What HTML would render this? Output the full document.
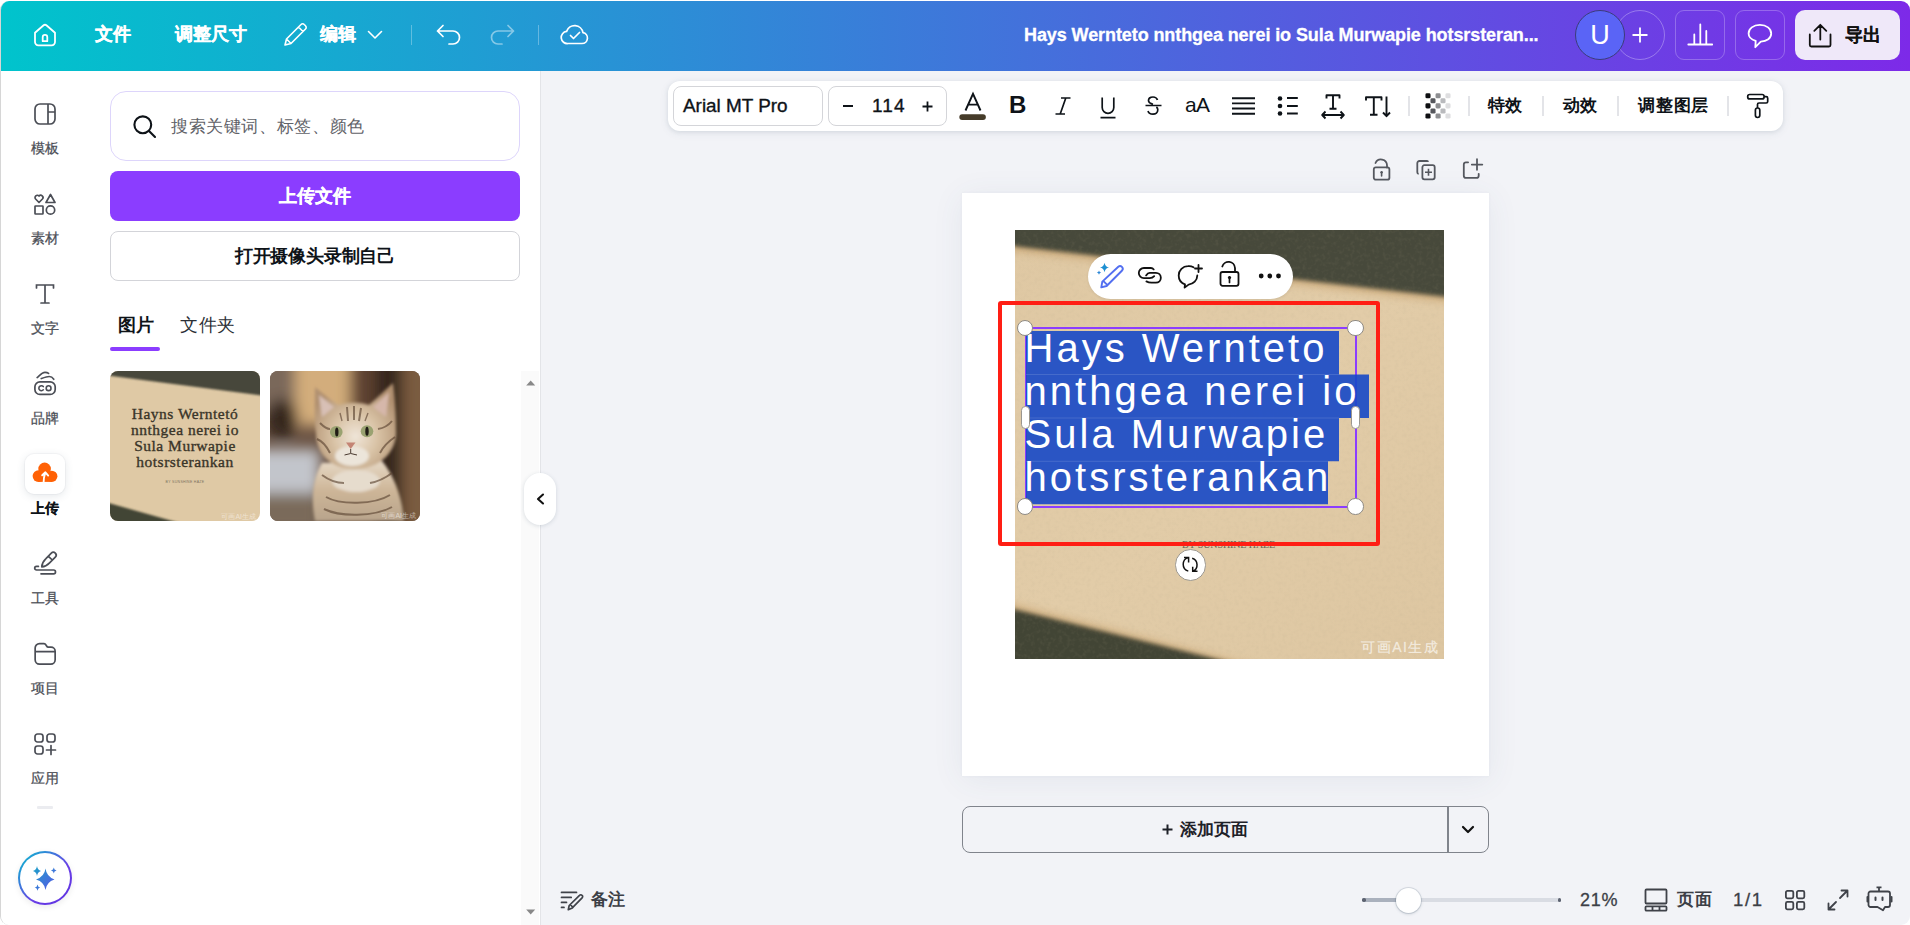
<!DOCTYPE html>
<html><head><meta charset="utf-8">
<style>
*{box-sizing:border-box;margin:0;padding:0}
html,body{width:1910px;height:925px;overflow:hidden;background:#fff;font-family:"Liberation Sans",sans-serif}
.abs{position:absolute}
#app{position:absolute;left:0;top:1px;width:1910px;height:924px;border-radius:9px;overflow:hidden;background:#f2f3f7;border-left:1px solid #d6d6d6}
#top{position:absolute;left:0;top:0;width:1909px;height:70px;background:linear-gradient(90deg,#00c4cc 0%,#7d2ae8 100%)}
.tw{color:#fff;font-weight:bold;font-size:17.5px;line-height:20px;position:absolute;-webkit-text-stroke:0.3px currentColor}
#rail{position:absolute;left:0;top:70px;width:90px;height:854px;background:#fff}
#panel{position:absolute;left:90px;top:70px;width:450px;height:854px;background:#fff;border-right:1px solid #e3e4e8}
.lbl{position:absolute;width:90px;left:0;text-align:center;font-size:13.5px;line-height:16px;color:#4b4e56;-webkit-text-stroke:0.25px currentColor}
svg{position:absolute;overflow:visible}
.b{-webkit-text-stroke:0.3px currentColor}
#top>*,#rail>*,#panel>*{translate:-1px -1px}
.hd{width:16.5px;height:16.5px;border-radius:50%;background:#fff;border:1px solid #8e8a84}
.pl{width:8.6px;height:22.8px;border-radius:4.3px;background:#fff;border:1px solid #9a968f}
</style></head><body>
<div id="app">
  <div id="top">
    <!-- home -->
    <svg style="left:33px;top:23px" width="24" height="24" viewBox="0 0 24 24" fill="none" stroke="#fff" stroke-width="1.8" stroke-linejoin="round"><path d="M2 9.8 L10.6 2.3 a2.2 2.2 0 0 1 2.8 0 L22 9.8 V19 a3.3 3.3 0 0 1 -3.3 3.3 H5.3 a3.3 3.3 0 0 1 -3.3 -3.3 Z"/><path d="M9.7 18.2 V14.2 a2.3 2.3 0 0 1 4.6 0 V18.2 Z"/></svg>
    <div class="tw" style="left:95px;top:24px">文件</div>
    <div class="tw" style="left:175px;top:24px">调整尺寸</div>
    <svg style="left:283px;top:22px" width="25" height="25" viewBox="0 0 25 25" fill="none" stroke="#fff" stroke-width="1.6" stroke-linejoin="round"><path d="M2 23 L3.5 17 L18 2.5 a2.2 2.2 0 0 1 3.2 0 l1.3 1.3 a2.2 2.2 0 0 1 0 3.2 L8 21.5 Z M15.5 5 l4.5 4.5 M3.5 17 l4.5 4.5"/></svg>
    <div class="tw" style="left:320px;top:24px">编辑</div>
    <svg style="left:367px;top:30px" width="16" height="10" viewBox="0 0 16 10" fill="none" stroke="#fff" stroke-width="1.6" stroke-linecap="round" stroke-linejoin="round"><path d="M1.5 1.5 L8 8 L14.5 1.5"/></svg>
    <div class="abs" style="left:411px;top:25px;width:1px;height:20px;background:rgba(255,255,255,.3)"></div>
    <svg style="left:436px;top:24px" width="26" height="20" viewBox="0 0 26 20" fill="none" stroke="#fff" stroke-width="1.7" stroke-linecap="round" stroke-linejoin="round"><path d="M7 1.5 L1.5 7 L7 12.5 M1.5 7 H17 a6.5 6.5 0 0 1 0 13 H13"/></svg>
    <svg style="left:489px;top:24px" width="26" height="20" viewBox="0 0 26 20" fill="none" stroke="rgba(255,255,255,.45)" stroke-width="1.7" stroke-linecap="round" stroke-linejoin="round"><path d="M19 1.5 L24.5 7 L19 12.5 M24.5 7 H9 a6.5 6.5 0 0 0 0 13 H13"/></svg>
    <div class="abs" style="left:538px;top:25px;width:1px;height:20px;background:rgba(255,255,255,.3)"></div>
    <svg style="left:561px;top:23px" width="28" height="22" viewBox="0 0 28 22" fill="none" stroke="#fff" stroke-width="1.7" stroke-linecap="round" stroke-linejoin="round"><path d="M7 20.5 H21 a5.5 5.5 0 0 0 1 -10.9 A8.5 8.5 0 0 0 5.6 8.4 A6 6 0 0 0 7 20.5 Z"/><path d="M9.5 12.5 l3 3 l6 -6"/></svg>

    <div class="tw" style="left:1024px;top:25px;font-size:18px;letter-spacing:-0.09px">Hays Wernteto nnthgea nerei io Sula Murwapie hotsrsteran...</div>

    <div class="abs" style="left:1615px;top:10px;width:50px;height:50px;border-radius:50%;border:1px solid rgba(255,255,255,.3)"></div>
    <div class="abs" style="left:1650px;top:22px;width:1px;height:1px"></div>
    <svg style="left:1631px;top:26px" width="18" height="18" viewBox="0 0 18 18" stroke="#fff" stroke-width="1.8"><path d="M9 1.5 V16.5 M1.5 9 H16.5"/></svg>
    <div class="abs" style="left:1575px;top:10px;width:50px;height:50px;border-radius:50%;background:#5a64f6;border:1px solid #3b3c7a;color:#fff;font-size:27px;line-height:48px;text-align:center">U</div>
    <div class="abs" style="left:1675px;top:10px;width:50px;height:50px;border-radius:9px;border:1px solid rgba(255,255,255,.25)"></div>
    <svg style="left:1687px;top:23px" width="26" height="24" viewBox="0 0 26 24" fill="none" stroke="#fff" stroke-width="1.8" stroke-linecap="round"><path d="M1.3 21.5 H25.2 M7.3 21.5 V11.5 M13.3 21.5 V1.5 M19.3 21.5 V8"/></svg>
    <div class="abs" style="left:1735px;top:10px;width:50px;height:50px;border-radius:9px;border:1px solid rgba(255,255,255,.25)"></div>
    <svg style="left:1747px;top:23px" width="26" height="26" viewBox="0 0 26 26" fill="none" stroke="#fff" stroke-width="1.8" stroke-linejoin="round"><path d="M12.9 1.9 C19.5 1.9 24.2 5.6 24.2 10.4 C24.2 15.1 19.8 18.4 13.8 18.6 L8.3 24.2 L8.7 17.8 C4.5 16.5 1.6 13.7 1.6 10.4 C1.6 5.6 6.3 1.9 12.9 1.9 Z"/></svg>
    <div class="abs" style="left:1795px;top:10px;width:105px;height:50px;border-radius:10px;background:#efe8f9"></div>
    <svg style="left:1808px;top:24px" width="25" height="24" viewBox="0 0 25 24" fill="none" stroke="#111" stroke-width="1.8" stroke-linecap="round" stroke-linejoin="round"><path d="M12.3 15.5 V0.8 M6.3 6.8 L12.3 0.8 L18.3 6.8 M1.8 10.5 V21 a1.5 1.5 0 0 0 1.5 1.5 H21 a1.5 1.5 0 0 0 1.5 -1.5 V10.5"/></svg>
    <div class="tw" style="left:1845px;top:24.5px;color:#111;font-size:18px;-webkit-text-stroke:0.1px #111">导出</div>
  </div>

  <div id="rail">
    <!-- templates -->
    <svg style="left:34px;top:33px" width="22" height="22" viewBox="0 0 22 22" fill="none" stroke="#4b4e56" stroke-width="1.7"><rect x="1" y="1" width="20" height="20" rx="5"/><path d="M14 1 V21 M14 9 H21"/></svg>
    <div class="lbl" style="top:71px">模板</div>
    <!-- elements -->
    <svg style="left:34px;top:123px" width="22" height="22" viewBox="0 0 22 22" fill="none" stroke="#4b4e56" stroke-width="1.7" stroke-linejoin="round"><path d="M5 9.5 L1.6 6 a2 2 0 0 1 3.4 -3 a2 2 0 0 1 3.4 3 Z"/><path d="M16.5 1.5 L21 9.5 H12 Z"/><rect x="1" y="13" width="8" height="8" rx="0.5"/><circle cx="16.5" cy="17" r="4.2"/></svg>
    <div class="lbl" style="top:161px">素材</div>
    <!-- text -->
    <svg style="left:34px;top:213px" width="22" height="22" viewBox="0 0 22 22" fill="none" stroke="#4b4e56" stroke-width="1.7" stroke-linecap="round"><path d="M2.5 5 V2 H19.5 V5 M11 2 V20 M7 20 H15"/></svg>
    <div class="lbl" style="top:251px">文字</div>
    <!-- brand -->
    <svg style="left:33px;top:300px" width="24" height="27" viewBox="0 0 24 27" fill="none" stroke="#4b4e56" stroke-width="1.7" stroke-linecap="round"><path d="M4.1 7.6 C6.5 5.6 9 2.4 12 2.4 C13.5 2.4 14.8 2.8 15.6 3.4" stroke-width="1.6"/><path d="M8.2 8.6 C11 7.6 14 6.5 16.2 6.5 C18 6.5 19.8 7.8 20.8 9.3" stroke-width="1.6"/><rect x="1.9" y="11.85" width="20.3" height="12.6" rx="5"/><path d="M10.3 16.6 A2.5 2.5 0 1 0 10.3 19.8" stroke-width="1.6"/><circle cx="15.6" cy="18.2" r="2.4" stroke-width="1.6"/></svg>
    <div class="lbl" style="top:341px">品牌</div>
    <!-- uploads active -->
    <div class="abs" style="left:25px;top:384px;width:40px;height:40px;border-radius:9px;background:#fff;box-shadow:0 2px 8px rgba(64,87,109,.14),0 0 0 1px rgba(64,87,109,.04)"></div>
    <svg style="left:31px;top:390px" width="28" height="25" viewBox="0 0 28 25"><g fill="#ff6105"><circle cx="13.6" cy="8.9" r="6.3"/><circle cx="7.4" cy="16.1" r="5.8"/><circle cx="20.8" cy="16.3" r="5.6"/><rect x="7.4" y="13" width="13.4" height="8.9"/></g><path d="M12.6 22.5 C12.6 18.5 13.3 15.3 14.3 12.6 M11.2 15.3 L14.4 12.3 L17.2 15.6" fill="none" stroke="#fff" stroke-width="1.9" stroke-linecap="round" stroke-linejoin="round"/></svg>
    <div class="lbl" style="top:431px;color:#0e1318;font-weight:bold;-webkit-text-stroke:0.2px currentColor">上传</div>
    <!-- tools -->
    <svg style="left:33px;top:480px" width="24" height="26" viewBox="0 0 24 26" fill="none" stroke="#4b4e56" stroke-width="1.7" stroke-linecap="round" stroke-linejoin="round"><path d="M8.8 16.9 Q9 12.5 12.7 8.9 L18.3 3.2 A2.8 2.8 0 0 1 22.3 7.2 L16.6 12.8 Q13 16.5 8.8 16.9 Z M15.4 6.3 L19.3 10"/><path d="M5.4 16.4 H3.5 a1.8 1.8 0 0 0 0 3.6 H20.6 a1.8 1.8 0 0 1 0 3.8 H8"/></svg>
    <div class="lbl" style="top:521px">工具</div>
    <!-- projects -->
    <svg style="left:33px;top:572px" width="24" height="24" viewBox="0 0 24 24" fill="none" stroke="#4b4e56" stroke-width="1.7" stroke-linejoin="round"><path d="M2.15 6 a4.35 4.35 0 0 1 4.35 -4.35 H11 a2 2 0 0 1 1.8 1.1 L13.6 4 a2 2 0 0 0 1.8 1.1 H18 a4.15 4.15 0 0 1 4.15 4.15 V17.7 a4.35 4.35 0 0 1 -4.35 4.35 H6.5 a4.35 4.35 0 0 1 -4.35 -4.35 Z M2.15 9.7 H22.15"/></svg>
    <div class="lbl" style="top:611px">项目</div>
    <!-- apps -->
    <svg style="left:34px;top:663px" width="22" height="22" viewBox="0 0 22 22" fill="none" stroke="#4b4e56" stroke-width="1.7" stroke-linecap="round"><rect x="1" y="1" width="8" height="8" rx="2.5"/><rect x="13" y="1" width="8" height="8" rx="2.5"/><rect x="1" y="13" width="8" height="8" rx="2.5"/><path d="M17 12.5 V21.5 M12.5 17 H21.5"/></svg>
    <div class="lbl" style="top:701px">应用</div>
    <div class="abs" style="left:37px;top:736px;width:16px;height:3px;background:#ebecf0;border-radius:1px"></div>
    <!-- magic -->
    <div class="abs" style="left:18px;top:781px;width:54px;height:54px;border-radius:50%;background:linear-gradient(135deg,#00c4cc,#6a3fe6 60%,#5b2ee0);box-shadow:0 2px 6px rgba(0,0,0,.08)"></div>
    <div class="abs" style="left:20px;top:783px;width:50px;height:50px;border-radius:50%;background:#fff"></div>
    <svg style="left:25px;top:789px" width="40" height="40" viewBox="0 0 40 40"><defs><linearGradient id="mg" x1="0" y1="0" x2="1" y2="1"><stop offset="0" stop-color="#1aa3c8"/><stop offset="1" stop-color="#5b52e8"/></linearGradient></defs>
      <path fill="url(#mg)" d="M20.5 9.5 Q21.5 17.5 29.5 20.5 Q21.5 23 20.5 31 Q19.5 23 11 20.5 Q19.5 17.5 20.5 9.5 Z M12 7 Q12.5 11 16 12 Q12.5 13 12 17 Q11.5 13 8 12 Q11.5 11 12 7 Z M28.8 8.5 Q29 10.8 31.5 11.5 Q29 12.2 28.8 14.5 Q28.6 12.2 26 11.5 Q28.6 10.8 28.8 8.5 Z M12.5 25.5 Q12.8 28 15.3 28.6 Q12.8 29.2 12.5 31.8 Q12.2 29.2 9.7 28.6 Q12.2 28 12.5 25.5 Z"/></svg>
  </div>
  <div id="panel">
    <div class="abs" style="left:20px;top:21px;width:410px;height:70px;border-radius:16px;border:1px solid #ddd5fb;background:#fff"></div>
    <svg style="left:43px;top:45px" width="24" height="24" viewBox="0 0 24 24" fill="none" stroke="#0e1318" stroke-width="2.1" stroke-linecap="round"><circle cx="9.8" cy="9.8" r="8.4"/><path d="M16 16 L22 22"/></svg>
    <div class="abs" style="left:81px;top:44.5px;letter-spacing:0.62px;font-size:17.3px;line-height:22px;color:#5f6268">搜索关键词、标签、颜色</div>
    <div class="abs" style="left:20px;top:101px;width:410px;height:50px;border-radius:8px;background:#8b3dff"></div>
    <div class="abs b" style="left:20px;top:115px;width:410px;text-align:center;font-size:17.8px;line-height:22px;color:#fff;font-weight:bold">上传文件</div>
    <div class="abs" style="left:20px;top:161px;width:410px;height:50px;border-radius:8px;border:1px solid #d3d4d9;background:#fff"></div>
    <div class="abs" style="left:20px;top:175px;width:410px;text-align:center;font-size:18px;line-height:22px;color:#0e1318;font-weight:bold;letter-spacing:-0.2px">打开摄像头录制自己</div>
    <div class="abs" style="left:28px;top:244px;font-size:17.8px;line-height:22px;color:#0e1318;font-weight:bold">图片</div>
    <div class="abs" style="left:90px;top:244px;font-size:18px;line-height:22px;color:#2b2f36;letter-spacing:0.5px">文件夹</div>
    <div class="abs" style="left:20px;top:277px;width:50px;height:4px;border-radius:2px;background:#8b3dff"></div>
    <div id="thumb1" class="abs" style="left:20px;top:301px;width:150px;height:150px;border-radius:8px;overflow:hidden">
      <svg style="left:0;top:0;overflow:hidden" width="150" height="150" viewBox="0 0 150 150">
        <defs><filter id="bl2" x="-10%" y="-10%" width="120%" height="120%"><feGaussianBlur stdDeviation="1.2"/></filter></defs>
        <rect width="150" height="150" fill="#dfc9a5"/>
        <g filter="url(#bl2)"><path d="M-5 -5 H155 V25 L-5 4 Z" fill="#46473a"/><path d="M-5 131 L80 155 H-5 Z" fill="#434534"/></g>
        <g font-family="Liberation Serif" font-size="15.5" fill="#3a3529" stroke="#3a3529" stroke-width="0.35" letter-spacing="0.5" text-anchor="middle">
          <text x="75" y="48">Hayns Werntetó</text>
          <text x="75" y="64">nnthgea nerei io</text>
          <text x="75" y="80">Sula Murwapie</text>
          <text x="75" y="96">hotsrsterankan</text>
        </g>
        <text x="75" y="112" font-family="Liberation Sans" font-size="3.5" fill="#7d7360" text-anchor="middle" letter-spacing="0.3">BY SUNSHINE HAZE</text>
        <text x="146" y="148" font-family="Liberation Sans" font-size="7" fill="rgba(255,255,255,.5)" text-anchor="end">可画AI生成</text>
      </svg>
    </div>
    <div id="thumb2" class="abs" style="left:180px;top:301px;width:150px;height:150px;border-radius:8px;overflow:hidden">
      <svg style="left:0;top:0;overflow:hidden" width="150" height="150" viewBox="0 0 150 150">
        <defs>
          <filter id="cb" x="-30%" y="-30%" width="160%" height="160%"><feGaussianBlur stdDeviation="7"/></filter>
          <filter id="cb2" x="-20%" y="-20%" width="140%" height="140%"><feGaussianBlur stdDeviation="1.5"/></filter>
          <filter id="cb3" x="-20%" y="-20%" width="140%" height="140%"><feGaussianBlur stdDeviation="0.7"/></filter>
          <radialGradient id="face" cx="0.5" cy="0.62" r="0.6"><stop offset="0" stop-color="#efe5d8"/><stop offset="0.45" stop-color="#d9c3a6"/><stop offset="1" stop-color="#b09070"/></radialGradient>
          <linearGradient id="body" x1="0" y1="0" x2="0" y2="1"><stop offset="0" stop-color="#e6d8c5"/><stop offset="0.5" stop-color="#cdb597"/><stop offset="1" stop-color="#b8a48c"/></linearGradient>
        </defs>
        <rect width="150" height="150" fill="#6a5242"/>
        <g filter="url(#cb)">
          <rect x="-20" y="-20" width="50" height="60" fill="#7a685a"/>
          <rect x="25" y="-20" width="60" height="75" fill="#d3ad7c"/>
          <rect x="80" y="-20" width="30" height="90" fill="#5e4330"/>
          <rect x="105" y="-20" width="30" height="180" fill="#35261b"/>
          <rect x="132" y="-20" width="30" height="180" fill="#7a5c40"/>
          <ellipse cx="12" cy="48" rx="16" ry="20" fill="#34281f"/>
          <rect x="-20" y="78" width="70" height="48" fill="#c2c5cb"/>
          <rect x="-20" y="122" width="70" height="40" fill="#7a6a5a"/>
        </g>
        <g filter="url(#cb2)">
          <path d="M45 150 C40 125 44 105 52 92 L112 90 C124 105 132 125 134 150 Z" fill="url(#body)"/>
          <path d="M46 62 C44 48 45 30 45 16 C55 24 62 30 69 34 C78 31 90 31 99 34 C106 28 114 20 123 12 C125 28 126 45 126 58 C128 80 110 98 85 98 C60 98 46 82 46 62 Z" fill="url(#face)"/>
          <path d="M49 24 L52 46 L64 36 Z" fill="#d8c0b6"/>
          <path d="M119 21 L116 46 L103 36 Z" fill="#d6b7aa"/>
          <ellipse cx="82" cy="85" rx="17" ry="10" fill="#ece5da"/>
          <ellipse cx="86" cy="110" rx="24" ry="11" fill="#e6dccd"/>
        </g>
        <g filter="url(#cb3)" stroke="#5e4634" stroke-width="2" fill="none" opacity="0.65">
          <path d="M77 36 L78 50 M84 35 L84 49 M91 37 L89 50"/>
          <path d="M47 68 C52 70 57 76 60 82 M125 66 C119 70 113 76 110 82"/>
          <path d="M56 126 C70 134 104 134 120 124"/>
          <path d="M52 104 C60 110 68 112 74 112 M122 102 C114 108 106 111 100 112"/>
          <path d="M54 138 C70 146 104 146 122 136"/>
          <path d="M50 52 C54 56 57 58 60 58 M122 50 C118 55 114 57 108 58"/>
          <path d="M70 42 L72 50 M98 42 L95 50" stroke-width="1.4"/>
        </g>
        <ellipse cx="66.3" cy="61" rx="6.3" ry="6" fill="#9aa271"/><ellipse cx="97" cy="60.3" rx="6.3" ry="6" fill="#9aa271"/>
        <ellipse cx="66.8" cy="61" rx="1.7" ry="4.5" fill="#201c15"/><ellipse cx="97" cy="60.3" rx="1.7" ry="4.5" fill="#201c15"/>
        <path d="M76 71.5 H85.5 L80.7 78 Z" fill="#c48474"/>
        <path d="M80.7 78 V82 M74.5 84 Q80.7 81 87 84" stroke="#4a3a30" stroke-width="1" fill="none"/>
        <text x="146" y="147" font-family="Liberation Sans" font-size="7" fill="rgba(255,255,255,.55)" text-anchor="end">可画AI生成</text>
      </svg>
    </div>
    <div class="abs" style="left:431px;top:301px;width:18px;height:554px;background:#fafafa"></div>
    <svg style="left:436px;top:310px" width="10" height="6" viewBox="0 0 10 6"><path d="M0.2 5.6 L4.7 0.6 L9.2 5.6 Z" fill="#888"/></svg>
    <svg style="left:436px;top:839px" width="10" height="6" viewBox="0 0 10 6"><path d="M0.2 0.4 L4.7 5.4 L9.2 0.4 Z" fill="#888"/></svg>
    
  </div>
  <div id="cv" class="abs" style="left:-1px;top:-1px;width:1910px;height:925px">
    <!-- toolbar -->
    <div class="abs" style="left:668px;top:81px;width:1115px;height:50px;border-radius:12px;background:#fff;box-shadow:0 1px 4px rgba(64,87,109,.12),0 2px 10px rgba(64,87,109,.08)"></div>
    <div class="abs" style="left:673px;top:86px;width:150px;height:40px;border-radius:8px;border:1px solid #d4d5d9"></div>
    <div class="abs" style="left:683px;top:95px;font-size:18.9px;line-height:22px;color:#0e1318;-webkit-text-stroke:0.35px currentColor">Arial MT Pro</div>
    <div class="abs" style="left:828px;top:86px;width:119px;height:40px;border-radius:8px;border:1px solid #d4d5d9"></div>
    <div class="abs" style="left:843px;top:105px;width:10px;height:2px;background:#0e1318"></div>
    <div class="abs" style="left:872px;top:95px;font-size:19px;line-height:22px;letter-spacing:1.2px;color:#0e1318;-webkit-text-stroke:0.35px currentColor">114</div>
    <svg style="left:922px;top:101px" width="11" height="11" viewBox="0 0 11 11" stroke="#0e1318" stroke-width="1.8"><path d="M5.5 0.5 V10.5 M0.5 5.5 H10.5"/></svg>
    <!-- text color A -->
    <svg style="left:959px;top:92px" width="28" height="30" viewBox="0 0 28 30"><path d="M6.5 18.5 L14 1.8 L21.5 18.5 M9.2 12.6 H18.8" fill="none" stroke="#0e1318" stroke-width="1.9"/><rect x="0.3" y="22.2" width="26.6" height="5.8" rx="2.9" fill="#463c2a"/></svg>
    <!-- B -->
    <div class="abs" style="left:1009px;top:92px;font-size:24px;line-height:26px;font-weight:bold;color:#0e1318">B</div>
    <!-- I -->
    <svg style="left:1055px;top:97px" width="16" height="18" viewBox="0 0 16 18" fill="none" stroke="#0e1318" stroke-width="1.7"><path d="M6 1 H15.5 M0.5 17 H10 M10.8 1 L5.2 17"/></svg>
    <!-- U -->
    <svg style="left:1100px;top:97px" width="16" height="22" viewBox="0 0 16 22" fill="none" stroke="#0e1318" stroke-width="1.7"><path d="M2.2 0.5 V10.5 a5.8 5.8 0 0 0 11.6 0 V0.5 M0.5 20.6 H15.5"/></svg>
    <!-- S -->
    <svg style="left:1145px;top:96px" width="17" height="20" viewBox="0 0 17 20" fill="none" stroke="#0e1318" stroke-width="1.7"><path d="M12.5 4 C11.8 2 10 1 8 1 C5.2 1 3.5 2.6 3.5 4.6 C3.5 6.5 5 7.5 8 8.3 M0.5 9.5 H16.5 M11.4 11 C12.4 11.8 12.8 12.7 12.8 13.8 C12.8 16.5 10.6 18.2 8 18.2 C5.5 18.2 3.6 17 3 15"/></svg>
    <!-- aA -->
    <div class="abs" style="left:1185px;top:93px;font-size:21px;line-height:24px;color:#0e1318;letter-spacing:-0.6px">aA</div>
    <!-- justify -->
    <svg style="left:1232px;top:97px" width="23" height="18" viewBox="0 0 23 18" stroke="#0e1318" stroke-width="1.9"><path d="M0 1.2 H23 M0 6.4 H23 M0 11.5 H23 M0 16.8 H23"/></svg>
    <!-- list -->
    <svg style="left:1277px;top:95px" width="22" height="22" viewBox="0 0 22 22"><circle cx="3" cy="3.5" r="2.3" fill="#0e1318"/><circle cx="3" cy="11" r="2.3" fill="#0e1318"/><circle cx="3" cy="18.5" r="2.3" fill="#0e1318"/><path d="M10 3 H20.8 M10 11 H20.8 M10 18.5 H20.8" stroke="#0e1318" stroke-width="1.9"/></svg>
    <!-- text width -->
    <svg style="left:1321px;top:94px" width="24" height="26" viewBox="0 0 24 26" fill="none" stroke="#0e1318" stroke-width="1.9" stroke-linejoin="round"><path d="M5.5 4.5 V1.2 H18.5 V4.5 M12 1.2 V14.8 M8.5 14.8 H15.5 M1.2 21 H22.8 M4.5 17.5 L1.2 21 L4.5 24.5 M19.5 17.5 L22.8 21 L19.5 24.5"/></svg>
    <!-- T down -->
    <svg style="left:1365px;top:96px" width="24" height="22" viewBox="0 0 24 22" fill="none" stroke="#0e1318" stroke-width="1.9" stroke-linejoin="round"><path d="M1 4.5 V1.2 H16.5 V4.5 M8.8 1.2 V18.8 M5 18.8 H12.5 M21.5 0.5 V20 M18 16.5 L21.5 20.2 L25 16.5"/></svg>
    <div class="abs" style="left:1408px;top:96px;width:2px;height:20px;background:#e3e4e8"></div>
    <!-- transparency -->
    <svg style="left:1425px;top:93px" width="26" height="26" viewBox="0 0 26 26"><rect x="0.45" y="0.25" width="5.1" height="5.1" rx="1.4" fill="#0e0f12"/><rect x="10.55" y="0.25" width="5.1" height="5.1" rx="1.4" fill="#8d8e91"/><rect x="20.45" y="0.25" width="5.1" height="5.1" rx="1.4" fill="#dedee0"/><rect x="5.45" y="5.25" width="5.1" height="5.1" rx="1.4" fill="#55575c"/><rect x="15.45" y="5.25" width="5.1" height="5.1" rx="1.4" fill="#b9babd"/><rect x="0.45" y="10.35" width="5.1" height="5.1" rx="1.4" fill="#0e0f12"/><rect x="10.55" y="10.35" width="5.1" height="5.1" rx="1.4" fill="#8d8e91"/><rect x="20.45" y="10.35" width="5.1" height="5.1" rx="1.4" fill="#dedee0"/><rect x="5.45" y="15.45" width="5.1" height="5.1" rx="1.4" fill="#55575c"/><rect x="15.45" y="15.45" width="5.1" height="5.1" rx="1.4" fill="#b9babd"/><rect x="0.45" y="20.45" width="5.1" height="5.1" rx="1.4" fill="#0e0f12"/><rect x="10.55" y="20.45" width="5.1" height="5.1" rx="1.4" fill="#8d8e91"/><rect x="20.45" y="20.45" width="5.1" height="5.1" rx="1.4" fill="#dedee0"/></svg>
    <div class="abs" style="left:1468px;top:96px;width:2px;height:20px;background:#e3e4e8"></div>
    <div class="abs" style="left:1488px;top:94px;font-size:17.3px;line-height:22px;font-weight:bold;color:#0e1318">特效</div>
    <div class="abs" style="left:1542px;top:96px;width:2px;height:20px;background:#e3e4e8"></div>
    <div class="abs" style="left:1563px;top:94px;font-size:17.3px;line-height:22px;font-weight:bold;color:#0e1318">动效</div>
    <div class="abs" style="left:1617px;top:96px;width:2px;height:20px;background:#e3e4e8"></div>
    <div class="abs" style="left:1638px;top:94px;font-size:17.3px;line-height:22px;font-weight:bold;color:#0e1318;letter-spacing:0.8px">调整图层</div>
    <div class="abs" style="left:1727px;top:96px;width:2px;height:20px;background:#e3e4e8"></div>
    <svg style="left:1745px;top:92px" width="26" height="28" viewBox="0 0 26 28" fill="none" stroke="#0e1318" stroke-width="1.7" stroke-linejoin="round"><rect x="2.7" y="2.5" width="16.4" height="4.4" rx="2"/><path d="M19.1 4.7 H21.2 a1.5 1.5 0 0 1 1.5 1.5 V9.5 a1.5 1.5 0 0 1 -1.5 1.5 H14 a1.5 1.5 0 0 0 -1.5 1.5 V16"/><rect x="10.4" y="16" width="4.4" height="9.5" rx="2.2"/></svg>

    <!-- page action icons -->
    <svg style="left:1372px;top:157px" width="20" height="24" viewBox="0 0 20 24" fill="none" stroke="#55585f" stroke-width="1.8" stroke-linecap="round"><path d="M3.5 6 a6 6 0 0 1 11.5 2.3 V10.5"/><rect x="1.8" y="10.4" width="15.6" height="12.3" rx="2"/><path d="M9.6 15.2 V19" stroke-width="1.6"/><circle cx="9.6" cy="15.3" r="1.2" fill="#55585f" stroke="none"/></svg>
    <svg style="left:1416px;top:160px" width="21" height="21" viewBox="0 0 21 21" fill="none" stroke="#55585f" stroke-width="1.8" stroke-linejoin="round"><path d="M12.2 1.9 a1.2 1.2 0 0 0 -1.2 -0.9 H3.5 a2.2 2.2 0 0 0 -2.2 2.2 V12.3 a1.5 1.5 0 0 0 1.4 1.5"/><rect x="6.4" y="5.2" width="12.3" height="14.1" rx="2"/><path d="M12.5 8.7 V15.8 M9 12.2 H16" stroke-width="1.6"/></svg>
    <svg style="left:1462px;top:158px" width="21" height="22" viewBox="0 0 21 22" fill="none" stroke="#55585f" stroke-width="1.8" stroke-linecap="round"><path d="M6.1 4.3 H4 a2.2 2.2 0 0 0 -2.2 2.2 V17.7 a2.2 2.2 0 0 0 2.2 2.2 H14.5 a2.2 2.2 0 0 0 2.2 -2.2 V15.8 M15 1.2 V11.8 M9.8 6.6 H20.3"/></svg>
    <!-- page -->
    <div class="abs" style="left:962px;top:193px;width:527px;height:583px;background:#fff;box-shadow:0 0 3px rgba(64,87,109,.05),0 4px 30px rgba(64,87,109,.08)"></div>
    <svg style="left:1015px;top:230px;overflow:hidden" width="429" height="429" viewBox="0 0 429 429">
      <defs>
        <filter id="bl" x="-10%" y="-10%" width="120%" height="120%"><feGaussianBlur stdDeviation="2.2"/></filter><filter id="bl3" x="-10%" y="-10%" width="120%" height="120%"><feGaussianBlur stdDeviation="5"/></filter>
        <filter id="tex" x="0" y="0" width="100%" height="100%"><feTurbulence type="fractalNoise" baseFrequency="0.25" numOctaves="3" seed="3"/><feColorMatrix values="0 0 0 0 0.45  0 0 0 0 0.38  0 0 0 0 0.25  0 0 0 -1.6 0.9"/></filter>
        <linearGradient id="bg1" x1="0" y1="0" x2="1" y2="1"><stop offset="0" stop-color="#dfc8a3"/><stop offset="0.5" stop-color="#e2cca8"/><stop offset="1" stop-color="#ddc6a1"/></linearGradient>
      </defs>
      <rect width="429" height="429" fill="url(#bg1)"/>
      <g filter="url(#bl3)" opacity="0.55">
        <path d="M-10 -10 H440 V72 L-10 19 Z" fill="#b88a50"/>
        <path d="M-10 373 L250 440 H-10 Z" fill="#b88a50"/>
      </g>
      <g filter="url(#bl)">
        <path d="M-10 -10 H440 V68 L-10 15 Z" fill="#47483a"/>
        <path d="M-10 377 L245 440 H-10 Z" fill="#434534"/>
      </g>
      <rect width="429" height="429" filter="url(#tex)" opacity="0.14"/>
      <text x="424.5" y="421.8" text-anchor="end" font-family="Liberation Sans" font-size="14" letter-spacing="1.5" fill="rgba(255,255,255,.6)" stroke="rgba(255,255,255,.35)" stroke-width="0.4">可画AI生成</text>
    </svg>
    <!-- tiny text -->
    <div class="abs" style="left:1182px;top:538.7px;font-family:'Liberation Serif',serif;font-size:10px;line-height:11px;letter-spacing:-0.1px;color:#6a6454;white-space:nowrap">BY SUNSHINE HAZE</div>
    <!-- red rect -->
    <div class="abs" style="left:998px;top:301px;width:382px;height:245px;border:4px solid #ff1e14;border-radius:3px"></div>
    <!-- purple box -->
    <div class="abs" style="left:1025px;top:327px;width:332px;height:181px;border:2px solid #8b3dff"></div>
    <!-- highlight -->
    <svg style="left:1026px;top:331px" width="344" height="174" viewBox="0 0 344 174"><path d="M0 0 H313 V43.5 H343 V87 H313 V130.3 H302 V173.3 H0 Z" fill="rgba(22,72,200,.9)"/><path d="M0 43.5 H313 M0 87 H313 M0 130.3 H302" stroke="rgba(255,255,255,.13)" stroke-width="1"/></svg>
    <div class="abs" style="left:1024.6px;top:326.7px;font-size:40px;line-height:43.23px;letter-spacing:3px;color:#fff;white-space:pre">Hays Wernteto
nnthgea nerei io
Sula Murwapie
hotsrsterankan</div>
    <!-- handles -->
    <div class="abs hd" style="left:1016.8px;top:319.8px"></div>
    <div class="abs hd" style="left:1347.3px;top:319.8px"></div>
    <div class="abs hd" style="left:1016.8px;top:498.3px"></div>
    <div class="abs hd" style="left:1347.3px;top:498.3px"></div>
    <div class="abs pl" style="left:1021.3px;top:406.3px"></div>
    <div class="abs pl" style="left:1351.4px;top:406.3px"></div>
    <!-- rotate -->
    <div class="abs" style="left:1175px;top:549.3px;width:31.3px;height:31.3px;border-radius:50%;background:#fff;border:1px solid #9c9890"></div>
    <svg style="left:1180px;top:554px" width="20" height="20" viewBox="0 0 20 20" fill="none" stroke="#111" stroke-width="1.5" stroke-linejoin="miter"><path d="M8.3 17.1 A7 7 0 0 1 8.4 3.6 M4 3.4 H8.6 V8.5"/><path d="M12.2 4.3 A7 7 0 0 1 13 17.3 M12.7 12.8 V17.3 H17.5"/></svg>
    <!-- mini toolbar -->
    <div class="abs" style="left:1088px;top:254px;width:205px;height:45px;border-radius:23px;background:#fff;box-shadow:0 1px 3px rgba(0,0,0,.08)"></div>
    <svg style="left:1096px;top:262px" width="28" height="28" viewBox="0 0 28 28">
      <path d="M8.5 0.8 Q9.2 4.8 13 5.5 Q9.2 6.2 8.5 10.2 Q7.8 6.2 4 5.5 Q7.8 4.8 8.5 0.8 Z" fill="#1e90d2"/>
      <path d="M3 8.4 Q3.35 10.25 5.2 10.6 Q3.35 10.95 3 12.8 Q2.65 10.95 0.8 10.6 Q2.65 10.25 3 8.4 Z" fill="#2a86d6"/>
      <path d="M5.3 25.4 L6.3 19.6 L22.3 4.7 A2.7 2.7 0 0 1 26.1 8.5 L10.6 24 Z M7.2 18.8 L11.2 22.8" fill="none" stroke="#536ff0" stroke-width="1.9" stroke-linejoin="round"/>
    </svg>
    <svg style="left:1134px;top:262px" width="32" height="26" viewBox="0 0 32 26" fill="none" stroke="#111" stroke-width="1.8" stroke-linecap="round"><path d="M19.7 7.4 C19 6.4 18 6 16.9 6 H9.9 A5.1 5.1 0 0 0 9.9 16.2 H15.7 C17.6 16.2 19.2 15.3 20.2 14.1"/><path d="M12.1 13.4 C13.1 11.8 14.3 10.8 15.7 10.8 H21.9 A4.95 4.95 0 0 1 21.9 20.7 H17.4 C15.5 20.7 13.8 20.2 12.4 19.4"/></svg>
    <svg style="left:1177px;top:264px" width="28" height="26" viewBox="0 0 28 26" fill="none" stroke="#111" stroke-width="1.8" stroke-linecap="round" stroke-linejoin="round"><path d="M16.5 3.3 A9.3 9.3 0 0 0 11 2.2 A9.3 9.3 0 0 0 1.7 11.5 A9.3 9.3 0 0 0 8 20.3 L7.6 23.6 L11.6 20.6 A9.3 9.3 0 0 0 20.3 11.5 M21.5 1 V8 M18 4.5 H25"/></svg>
    <svg style="left:1219px;top:260px" width="22" height="28" viewBox="0 0 22 28" fill="none" stroke="#111" stroke-width="1.8" stroke-linecap="round"><path d="M3.3 6.5 A6.5 6.5 0 0 1 16 8 V12"/><rect x="1.5" y="12" width="18" height="13.8" rx="2"/><path d="M10.5 17.2 V22.5" stroke-width="1.7"/><circle cx="10.5" cy="17.5" r="1.6" fill="#111" stroke="none"/></svg>
    <svg style="left:1258px;top:273px" width="24" height="6" viewBox="0 0 24 6" fill="#111"><circle cx="3.2" cy="3" r="2.4"/><circle cx="11.8" cy="3" r="2.4"/><circle cx="20.5" cy="3" r="2.4"/></svg>

    <!-- add page -->
    <div class="abs" style="left:962px;top:806px;width:527px;height:47px;border-radius:8px;border:1.5px solid #80848c"></div>
    <div class="abs" style="left:1447px;top:807px;width:1.5px;height:45px;background:#80848c"></div>
    <svg style="left:1162px;top:824px" width="11" height="11" viewBox="0 0 11 11" stroke="#1e2128" stroke-width="2"><path d="M5.5 0.5 V10.5 M0.5 5.5 H10.5"/></svg>
    <div class="abs" style="left:1180px;top:818px;font-size:17.3px;line-height:22px;font-weight:bold;color:#1e2128">添加页面</div>
    <svg style="left:1461px;top:825px" width="14" height="10" viewBox="0 0 14 10" fill="none" stroke="#111" stroke-width="2.2" stroke-linecap="round" stroke-linejoin="round"><path d="M2 2 L7 7 L12 2"/></svg>
    <!-- bottom bar -->
    <svg style="left:560px;top:890px" width="25" height="22" viewBox="0 0 25 22" fill="none" stroke="#3f4249" stroke-width="1.7" stroke-linecap="round"><path d="M1.5 2.4 H16.5 M1.5 7.4 H11.2 M1.5 12.4 H6.5 M1.5 17.4 H4"/><path d="M8.3 19.6 L9.2 15.5 L19.5 5.3 a1.8 1.8 0 0 1 2.6 0 a1.8 1.8 0 0 1 0 2.6 L11.8 18.3 Z M10.2 14.5 L13 17.3" stroke-linejoin="round"/></svg>
    <div class="abs" style="left:591px;top:888px;font-size:17.3px;line-height:22px;font-weight:bold;color:#3c3f46">备注</div>
    <div class="abs" style="left:1362px;top:898px;width:199px;height:4px;border-radius:2px;background:#d9dce3"></div>
    <div class="abs" style="left:1362px;top:898px;width:46px;height:4px;border-radius:2px;background:#aab1bd"></div>
    <div class="abs" style="left:1362px;top:898.2px;width:3.6px;height:3.6px;border-radius:50%;background:#5c6270"></div>
    <div class="abs" style="left:1557.5px;top:898.2px;width:3.6px;height:3.6px;border-radius:50%;background:#5c6270"></div>
    <div class="abs" style="left:1396px;top:888px;width:25px;height:25px;border-radius:50%;background:#fff;box-shadow:0 0 0 1px rgba(64,87,109,.14),0 1px 3px rgba(64,87,109,.25)"></div>
    <div class="abs" style="left:1580px;top:889px;font-size:18px;line-height:22px;letter-spacing:0.8px;color:#3c3f46;-webkit-text-stroke:0.3px currentColor">21%</div>
    <svg style="left:1644px;top:888px" width="24" height="24" viewBox="0 0 24 24" fill="none" stroke="#3f4249" stroke-width="1.8"><rect x="1.5" y="1.5" width="21" height="14" rx="1"/><rect x="1.5" y="18.3" width="21" height="4.4" rx="1"/><path d="M8.5 18.3 V22.7 M15.5 18.3 V22.7"/></svg>
    <div class="abs" style="left:1677px;top:888px;font-size:17.3px;letter-spacing:0.6px;line-height:22px;font-weight:bold;color:#3c3f46">页面</div>
    <div class="abs" style="left:1733px;top:888.5px;font-size:18.5px;line-height:22px;letter-spacing:1.6px;color:#3c3f46;-webkit-text-stroke:0.3px currentColor">1/1</div>
    <svg style="left:1784px;top:889px" width="22" height="22" viewBox="0 0 22 22" fill="none" stroke="#3f4249" stroke-width="1.8"><rect x="1.9" y="1.9" width="7.4" height="7.4" rx="1.5"/><rect x="12.9" y="1.9" width="7.4" height="7.4" rx="1.5"/><rect x="1.9" y="12.9" width="7.4" height="7.4" rx="1.5"/><rect x="12.9" y="12.9" width="7.4" height="7.4" rx="1.5"/></svg>
    <svg style="left:1827px;top:889px" width="22" height="22" viewBox="0 0 22 22" fill="none" stroke="#3f4249" stroke-width="1.8" stroke-linecap="round" stroke-linejoin="round"><path d="M13 9 L20.5 1.5 M14.5 1.5 H20.5 V7.5 M9 13 L1.5 20.5 M1.5 14.5 V20.5 H7.5"/></svg>
    <svg style="left:1866px;top:886px" width="28" height="26" viewBox="0 0 28 26" fill="none" stroke="#3f4249" stroke-width="1.8" stroke-linejoin="round"><path d="M10.5 1.3 H15.5 M13 1.3 V5.5"/><path d="M4.5 5.5 H22 a2 2 0 0 1 2 2 V19 a2 2 0 0 1 -2 2 H19 L17 24.3 L11.5 21 H4.5 a2 2 0 0 1 -2 -2 V7.5 a2 2 0 0 1 2 -2 Z"/><path d="M1.5 11 V15.5 M25.5 11 V15.5 M9.5 11.5 V14 M16.5 11.5 V14" stroke-linecap="round" stroke-width="2"/></svg>
    <!-- collapse handle -->
    <div class="abs" style="left:524px;top:473px;width:32px;height:52px;border-radius:16px;background:#fff;box-shadow:0 1px 4px rgba(64,87,109,.18)"></div>
    <svg style="left:536px;top:493px" width="9" height="12" viewBox="0 0 9 12" fill="none" stroke="#111" stroke-width="2.1" stroke-linecap="round" stroke-linejoin="round"><path d="M7 1.5 L2 6 L7 10.5"/></svg>

  </div>
</div>
</body></html>
